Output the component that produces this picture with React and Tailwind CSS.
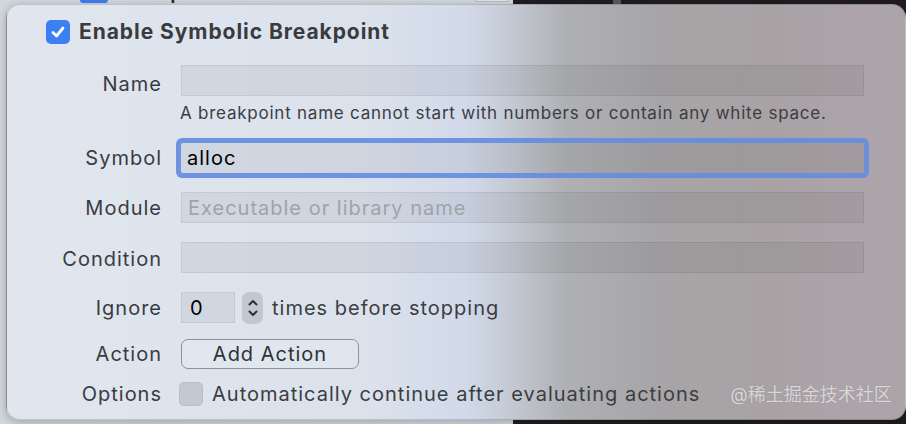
import React from "react";

const font = { fontFamily: "Inter, 'Noto Sans', 'Noto Sans CJK SC', sans-serif" };

function Field({ children, className = "" }) {
  return (
    <div
      className={
        "flex h-[31px] w-[683px] items-center border border-black/[0.06] bg-black/[0.055] px-[6px] text-[20px] tracking-[0.05em] " +
        className
      }
    >
      {children}
    </div>
  );
}

function Row({ label, children, className = "", labelClass = "" }) {
  return (
    <div className={"flex items-center " + className}>
      <div className={"w-[155px] shrink-0 text-right text-[20px] tracking-[0.05em] text-[#393c42] " + labelClass}>{label}</div>
      <div className="ml-[19px] flex items-center">{children}</div>
    </div>
  );
}

function Stepper() {
  return (
    <div className="ml-[7px] flex h-[32px] w-[21px] flex-col items-center justify-center rounded-[7px] bg-[#c3c8d0]">
      <svg width="12" height="24" viewBox="0 0 12 24" fill="none" stroke="#2f3236" strokeWidth="2" strokeLinecap="round" strokeLinejoin="round">
        <path d="M2.5 8.5 L6 5 L9.5 8.5" />
        <path d="M2.5 15.5 L6 19 L9.5 15.5" />
      </svg>
    </div>
  );
}

export default function App() {
  return (
    <div className="relative h-[424px] w-[906px] overflow-hidden" style={font}>
      {/* window behind the popover */}
      <div className="flex h-full w-full">
        <div className="relative h-full w-[513px] bg-[#d3d8de]">
          <div className="absolute left-[80px] top-[-8px] h-[11px] w-[28px] rounded-[3px] bg-[#3f7ef0]" />
          <div className="absolute left-[122px] top-[-8px] h-[11px] w-[330px] overflow-hidden">
            <div className="mt-[-12px] text-[20px] font-semibold leading-[24px] text-[#2a2a2c]">CAD presented CAAnimat</div>
          </div>
          <div className="absolute left-[472px] top-[-10px] h-[12px] w-[40px] rounded-[8px] border border-[#b9bcc1] bg-[#e4e6ea]" />
        </div>
        <div className="relative h-full flex-1 bg-[#1f1d21]">
          <div className="absolute left-[100px] top-0 h-[4px] w-[8px] bg-[#5a585c]" />
        </div>
      </div>

      {/* popover */}
      <div className="absolute left-[6px] top-[4px] flex h-[416px] w-[900px] flex-col rounded-[14px] border border-black/15 bg-[linear-gradient(90deg,#e1e6ee_0%,#dbe2ec_40%,#d2daea_51%,#c4cad4_56%,#b0b1b5_62%,#a7a5a7_72%,#a8a2a5_85%,#aca4aa_95%,#aaa4a9_100%)] shadow-[0_2px_10px_rgba(0,0,0,0.25)]">
        <div className="mt-[15px] ml-[39px] flex h-[24px] items-center">
          <div className="flex h-[24px] w-[24px] items-center justify-center rounded-[5px] bg-[#3b7ff2]">
            <svg width="16" height="16" viewBox="0 0 16 16" fill="none" stroke="white" strokeWidth="2.8" strokeLinecap="round" strokeLinejoin="round">
              <path d="M3 8.5 L6.5 12 L13 4" />
            </svg>
          </div>
          <span className="ml-[9px] text-[21px] font-bold tracking-[0.045em] text-[#383b40]">Enable Symbolic Breakpoint</span>
        </div>

        <Row label="Name" className="mt-[21px] h-[31px]" labelClass="pt-[7px]">
          <Field />
        </Row>

        <div className="mt-[7px] ml-[173px] h-[20px] text-[17px] leading-[20px] tracking-[0.045em] text-[#3a3d42]">
          A breakpoint name cannot start with numbers or contain any white space.
        </div>

        <Row label="Symbol" className="mt-[20px] h-[30px]">
          <div className="flex h-[30px] w-[683px] items-center rounded-[2px] bg-black/[0.055] px-[6px] text-[20px] tracking-[0.05em] text-black shadow-[0_0_0_5px_rgba(102,140,224,0.92)]">
            alloc
          </div>
        </Row>

        <Row label="Module" className="mt-[19px] h-[31px]">
          <Field className="text-[#9fa3aa]">Executable or library name</Field>
        </Row>

        <Row label="Condition" className="mt-[19px] h-[31px]" labelClass="pt-[3px]">
          <Field />
        </Row>

        <Row label="Ignore" className="mt-[19px] h-[31px]">
          <div className="flex h-[31px] w-[54px] items-center border border-black/[0.06] bg-black/[0.055] px-[8px] text-[20px] text-black">
            0
          </div>
          <Stepper />
          <span className="ml-[9px] text-[20px] tracking-[0.05em] text-[#3a3d42]">times before stopping</span>
        </Row>

        <Row label="Action" className="mt-[16px] h-[30px]">
          <button className="flex h-[30px] w-[178px] items-center justify-center rounded-[7px] border border-[#8e9197] bg-white/10 text-[20px] tracking-[0.05em] text-[#2e3135]">
            Add Action
          </button>
        </Row>

        <Row label="Options" className="mt-[13px] h-[24px]">
          <div className="-ml-[2px] h-[24px] w-[24px] rounded-[5px] border border-black/5 bg-[#c4c9d0]" />
          <span className="ml-[9px] text-[20px] tracking-[0.05em] text-[#3a3d42]">Automatically continue after evaluating actions</span>
          <span className="ml-[30px] text-[18px] text-white/70 [text-shadow:0_0_1px_rgba(0,0,0,0.25)]">@稀土掘金技术社区</span>
        </Row>
      </div>
    </div>
  );
}
